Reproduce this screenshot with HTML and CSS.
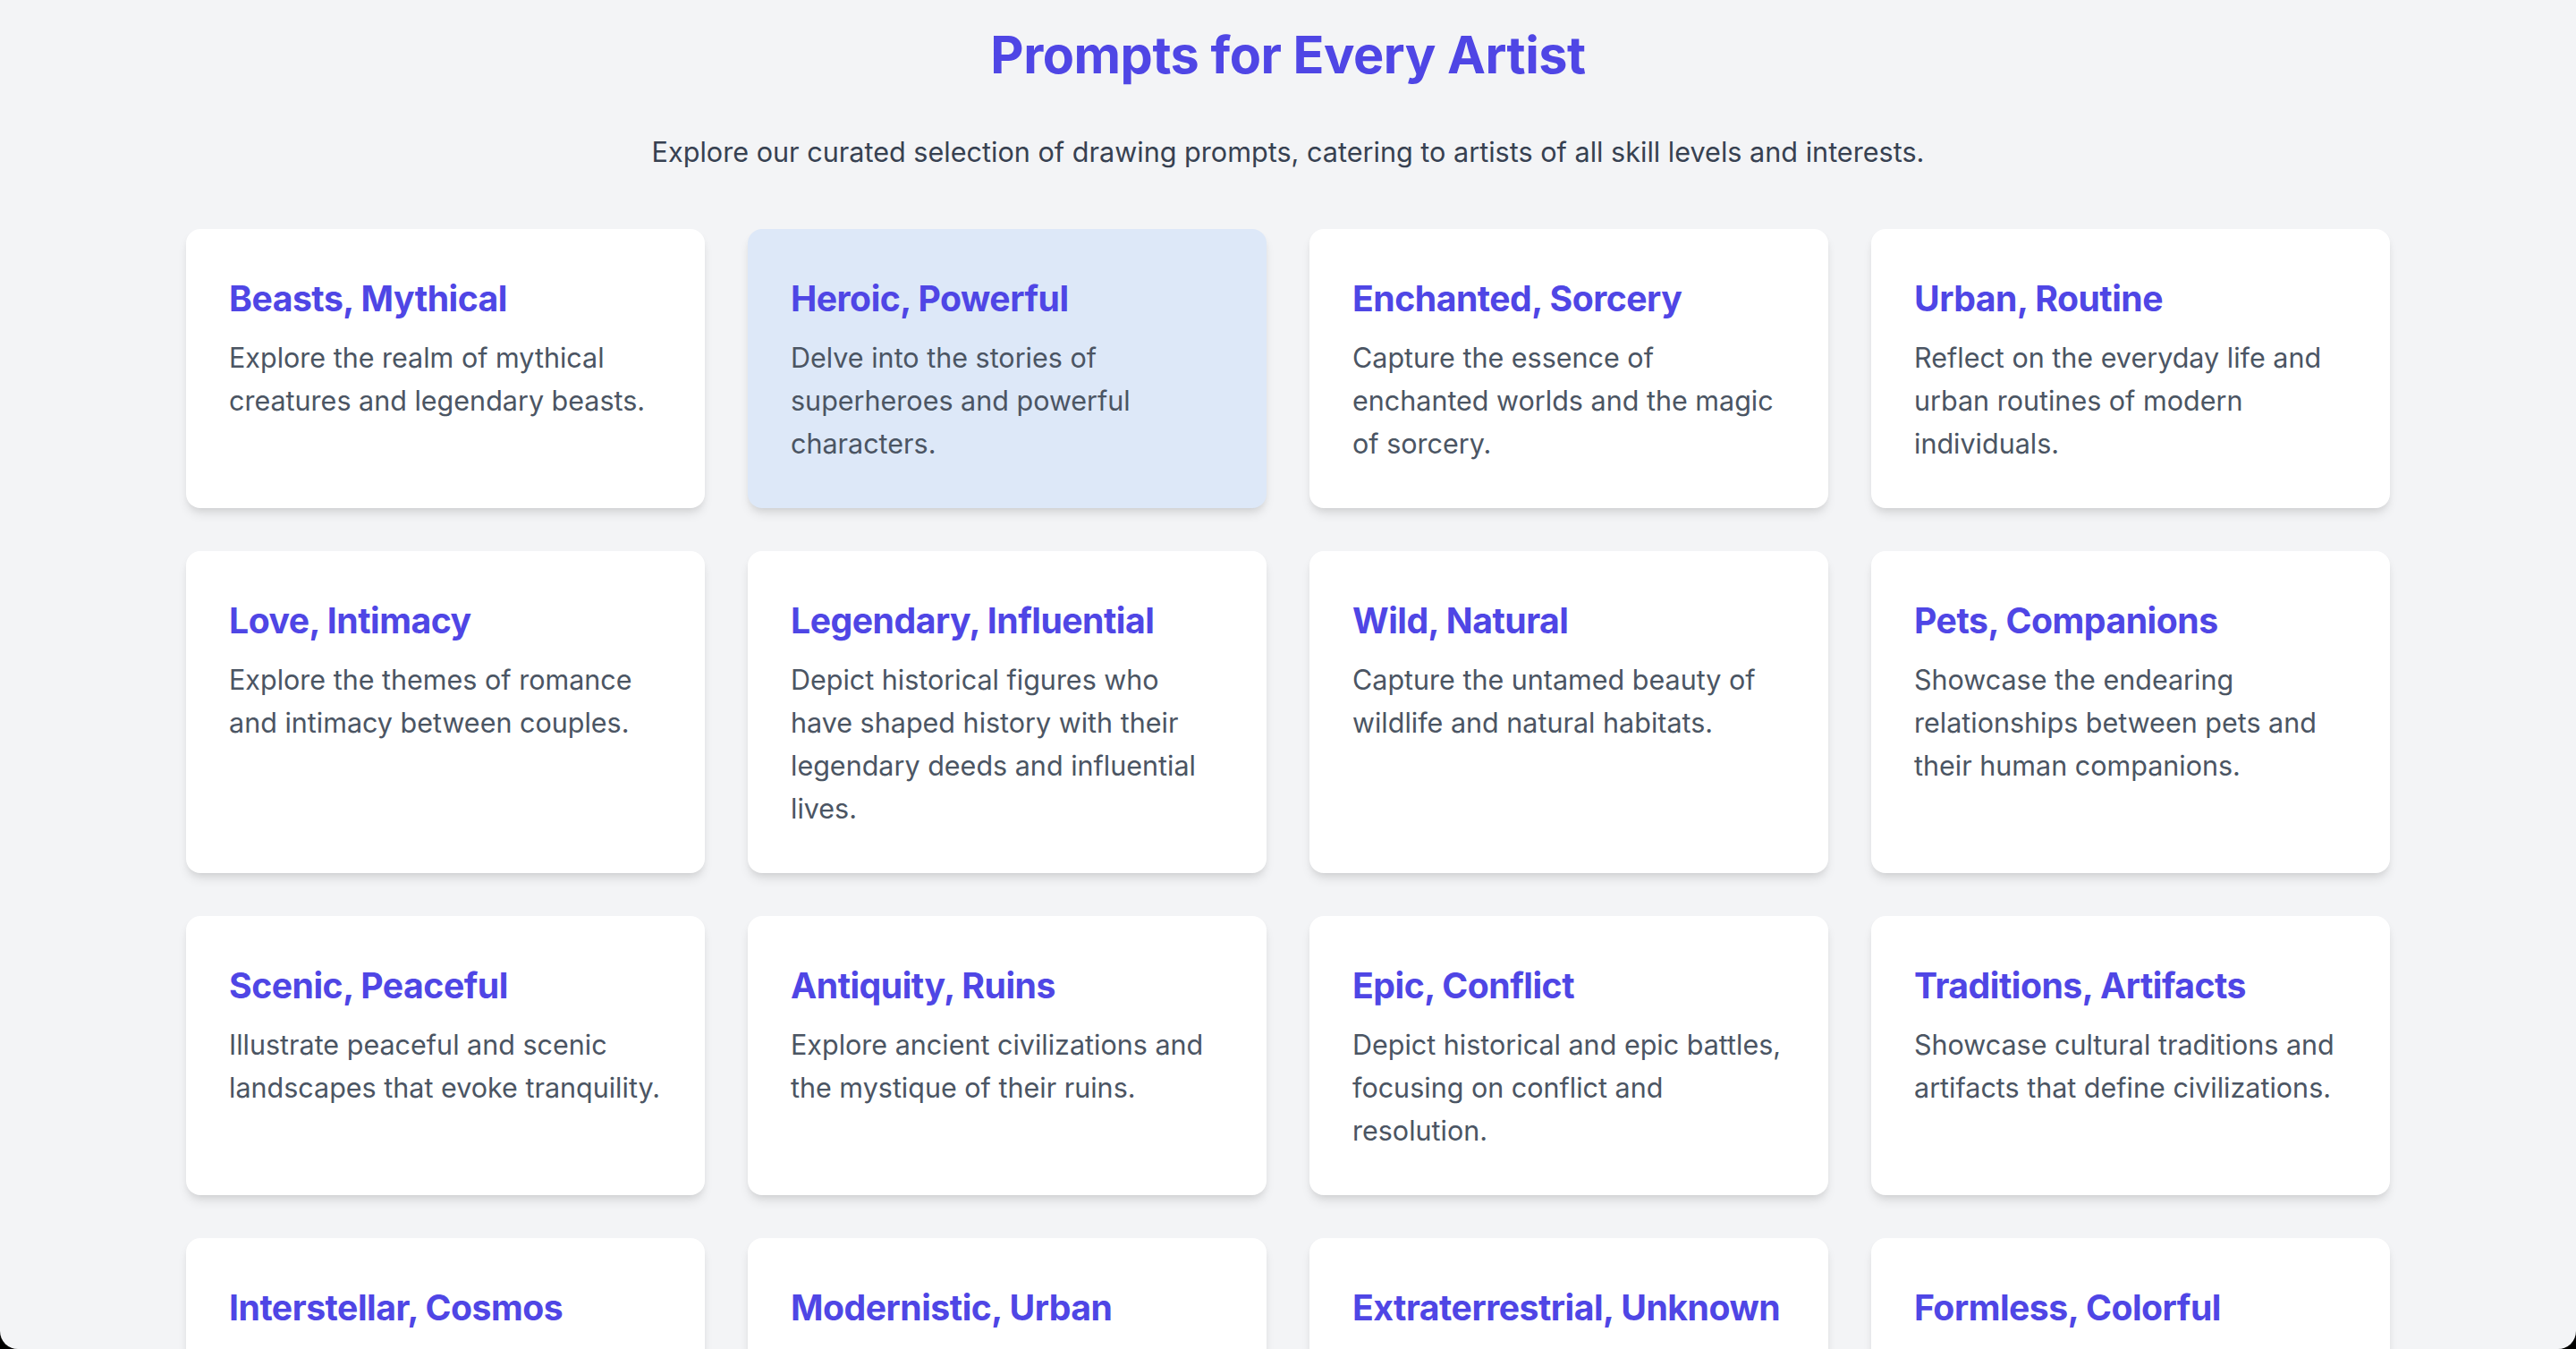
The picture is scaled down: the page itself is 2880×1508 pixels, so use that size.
FILE: index.html
```html
<!DOCTYPE html>
<html lang="en">
<head>
<meta charset="utf-8">
<title>Prompts for Every Artist</title>
<link rel="stylesheet" href="styles.css">
</head>
<body>
<main class="page">
  <h1 class="title">Prompts for Every Artist</h1>
  <p class="subtitle">Explore our curated selection of drawing prompts, catering to artists of all skill levels and interests.</p>
  <div class="grid">
    <div class="card"><h2 class="card-title">Beasts, Mythical</h2><p class="card-text">Explore the realm of mythical creatures and legendary beasts.</p></div>
    <div class="card card-active"><h2 class="card-title">Heroic, Powerful</h2><p class="card-text">Delve into the stories of superheroes and powerful characters.</p></div>
    <div class="card"><h2 class="card-title">Enchanted, Sorcery</h2><p class="card-text">Capture the essence of enchanted worlds and the magic of sorcery.</p></div>
    <div class="card"><h2 class="card-title">Urban, Routine</h2><p class="card-text">Reflect on the everyday life and urban routines of modern individuals.</p></div>
    <div class="card"><h2 class="card-title">Love, Intimacy</h2><p class="card-text">Explore the themes of romance and intimacy between couples.</p></div>
    <div class="card"><h2 class="card-title">Legendary, Influential</h2><p class="card-text">Depict historical figures who have shaped history with their legendary deeds and influential lives.</p></div>
    <div class="card"><h2 class="card-title">Wild, Natural</h2><p class="card-text">Capture the untamed beauty of wildlife and natural habitats.</p></div>
    <div class="card"><h2 class="card-title">Pets, Companions</h2><p class="card-text">Showcase the endearing relationships between pets and their human companions.</p></div>
    <div class="card"><h2 class="card-title">Scenic, Peaceful</h2><p class="card-text">Illustrate peaceful and scenic landscapes that evoke tranquility.</p></div>
    <div class="card"><h2 class="card-title">Antiquity, Ruins</h2><p class="card-text">Explore ancient civilizations and the mystique of their ruins.</p></div>
    <div class="card"><h2 class="card-title">Epic, Conflict</h2><p class="card-text">Depict historical and epic battles, focusing on conflict and resolution.</p></div>
    <div class="card"><h2 class="card-title">Traditions, Artifacts</h2><p class="card-text">Showcase cultural traditions and artifacts that define civilizations.</p></div>
    <div class="card"><h2 class="card-title">Interstellar, Cosmos</h2><p class="card-text">Journey through the stars and the vast wonders of the cosmos.</p></div>
    <div class="card"><h2 class="card-title">Modernistic, Urban</h2><p class="card-text">Capture the clean lines and bold forms of modern cityscapes.</p></div>
    <div class="card"><h2 class="card-title">Extraterrestrial, Unknown</h2><p class="card-text">Imagine alien life forms and the mysteries of the unknown.</p></div>
    <div class="card"><h2 class="card-title">Formless, Colorful</h2><p class="card-text">Experiment with abstract shapes and vibrant bursts of color.</p></div>
  </div>
</main>
</body>
</html>
```

FILE: styles.css
```css
html {
  background: #000;
}

body {
  margin: 0;
  height: 100vh;
  overflow: hidden;
  background: #f3f4f6;
  border-radius: 0 0 20px 20px;
  font-family: Inter, "Noto Sans", "Liberation Sans", sans-serif;
}

.page {
  width: 2464px;
  margin: 0 auto;
  padding-top: 25px;
}

.title {
  margin: 0;
  text-align: center;
  font-size: 57.6px;
  line-height: 72px;
  font-weight: 700;
  color: #4f46e5;
  letter-spacing: -0.5px;
}

.subtitle {
  margin: 45px 0 0;
  text-align: center;
  font-size: 30.6px;
  line-height: 56px;
  color: #374151;
}

.grid {
  display: grid;
  grid-template-columns: repeat(4, 1fr);
  gap: 48px;
  margin-top: 58px;
}

.card {
  background: #fff;
  border-radius: 16px;
  padding: 50px 47px 48px 48px;
  box-shadow: 0 8px 12px -2px rgba(0, 0, 0, 0.1), 0 4px 8px -4px rgba(0, 0, 0, 0.1);
}

.card-active {
  background: #dde8f8;
}

.card-title {
  margin: 0 0 14px;
  font-size: 39.2px;
  line-height: 56px;
  font-weight: 700;
  color: #4f46e5;
  letter-spacing: -0.5px;
  white-space: nowrap;
}

.card-text {
  margin: 0;
  font-size: 30.5px;
  line-height: 48px;
  color: #4b5563;
}
```
